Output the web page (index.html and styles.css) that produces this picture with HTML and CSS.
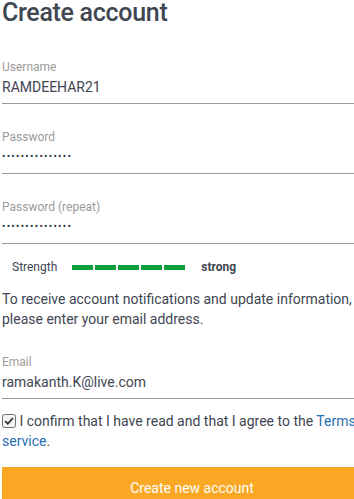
FILE: index.html
```html
<!DOCTYPE html>
<html lang="en">
<head>
  <meta charset="UTF-8">
  <meta name="viewport" content="width=device-width, initial-scale=1.0">
  <title>Create account</title>
  <link rel="stylesheet" href="styles.css">
</head>
<body>

  <div class="signup">
    <h1>Create account</h1>

    <div class="field">
      <div class="field-label">Username</div>
      <div class="field-value">RAMDEEHAR21</div>
    </div>

    <div class="field">
      <div class="field-label">Password</div>
      <div class="field-value dots">&bull;&bull;&bull;&bull;&bull;&bull;&bull;&bull;&bull;&bull;&bull;&bull;&bull;&bull;&bull;</div>
    </div>

    <div class="field">
      <div class="field-label">Password (repeat)</div>
      <div class="field-value dots">&bull;&bull;&bull;&bull;&bull;&bull;&bull;&bull;&bull;&bull;&bull;&bull;&bull;&bull;&bull;</div>
    </div>

    <!-- Password strength meter -->
    <div class="strength">
      <span class="strength-label">Strength</span>
      <span class="meter">
        <span class="bar"></span>
        <span class="bar"></span>
        <span class="bar"></span>
        <span class="bar"></span>
        <span class="bar"></span>
      </span>
      <span class="strength-text">strong</span>
    </div>

    <p class="info">To receive account notifications and update information, please enter your email address.</p>

    <div class="field">
      <div class="field-label">Email</div>
      <div class="field-value">ramakanth.K@live.com</div>
    </div>

    <label class="confirm">
      <svg class="check" width="14" height="14" viewBox="0 0 14 14">
        <rect x="0.5" y="0.5" width="13" height="13" rx="2" fill="#f4f4f4" stroke="#6f6f6f"/>
        <path d="M3.2 7.2 L5.8 9.8 L10.8 4.2" fill="none" stroke="#333" stroke-width="1.8"/>
      </svg>
      I confirm that I have read and that I agree to the <a href="#">Terms of service</a>.
    </label>

    <button class="submit">Create new account</button>
  </div>

</body>
</html>
```

FILE: styles.css
```css
/* page */
body {
  margin: 0;
  overflow: hidden;
  font-family: 'Roboto', sans-serif;
  color: #404652;
  background: #fff;
}

.signup {
  width: 380px;
  margin-left: 2px;
}

h1 {
  margin: 0 0 8px;
  font-size: 25px;
  line-height: 26px;
  font-weight: 500;
  letter-spacing: -0.3px;
}

/* text fields */
.field {
  padding: 25px 0 6px;
  border-bottom: 1px solid #9a9a9a;
}

.field-label {
  font-size: 12px;
  line-height: 16px;
  color: #9b9b9b;
}

.field-value {
  margin-top: 2px;
  font-size: 14px;
  line-height: 20px;
}

.field-value.dots {
  font-size: 10px;
  letter-spacing: 1.3px;
  color: #2f3440;
}

/* strength meter */
.strength {
  display: flex;
  align-items: center;
  margin-top: 14px;
  padding-left: 10px;
  height: 18px;
  font-size: 12px;
}

.meter {
  display: flex;
  gap: 2px;
  margin-left: 15px;
}

.bar {
  width: 21px;
  height: 5px;
  background-color: #0a9e3b;
}

.strength-text {
  margin-left: 16px;
  font-weight: 700;
}

.info {
  margin: 13px 0 0;
  font-size: 14px;
  line-height: 20px;
}

/* terms checkbox */
.confirm {
  display: block;
  margin-top: 12px;
  font-size: 14px;
  line-height: 20px;
}

.check {
  vertical-align: -2px;
}

.confirm a {
  color: #2a6db3;
  text-decoration: none;
}

.submit {
  display: block;
  width: 100%;
  height: 41px;
  margin-top: 16px;
  border: none;
  background-color: #faa724;
  color: #fff;
  font-family: 'Roboto', sans-serif;
  font-size: 14px;
  cursor: pointer;
}
```
